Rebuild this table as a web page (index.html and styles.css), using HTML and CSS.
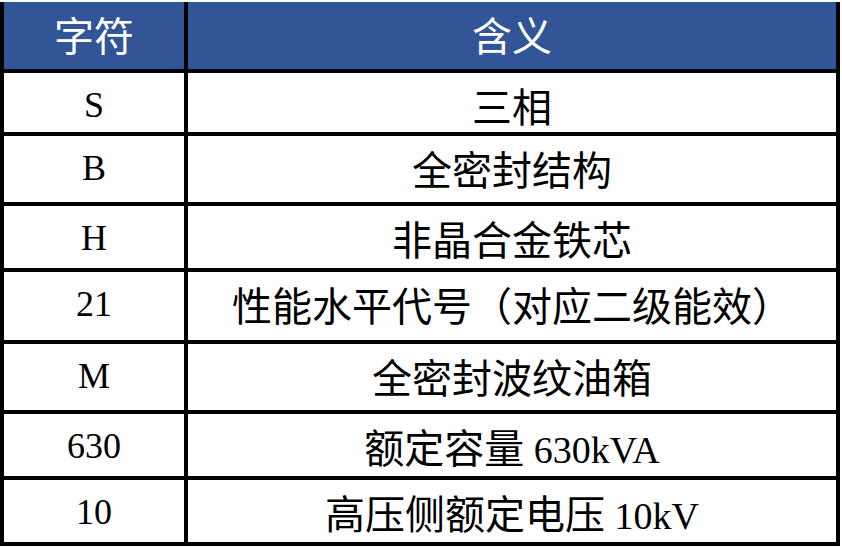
FILE: index.html
```html
<!DOCTYPE html>
<html lang="zh-CN">
<head>
<meta charset="utf-8">
<title>变压器型号含义</title>
<link rel="stylesheet" href="styles.css">
</head>
<body>
<div class="spec-table">
  <div class="cell head first"><span class="zh">字符</span></div>
  <div class="cell head"><span class="zh">含义</span></div>

  <div class="cell first">S</div>
  <div class="cell"><span class="zh">三相</span></div>

  <div class="cell first">B</div>
  <div class="cell"><span class="zh">全密封结构</span></div>

  <div class="cell first">H</div>
  <div class="cell"><span class="zh">非晶合金铁芯</span></div>

  <div class="cell first">21</div>
  <div class="cell"><span class="zh">性能水平代号（对应二级能效）</span></div>

  <div class="cell first">M</div>
  <div class="cell"><span class="zh">全密封波纹油箱</span></div>

  <div class="cell first">630</div>
  <div class="cell"><span class="zh">额定容量</span><span class="en">&nbsp;630kVA</span></div>

  <div class="cell first">10</div>
  <div class="cell"><span class="zh">高压侧额定电压</span><span class="en">&nbsp;10kV</span></div>
</div>
</body>
</html>
```

FILE: styles.css
```css
html, body {
  margin: 0;
  padding: 0;
  background: #ffffff;
}

body {
  padding-top: 2px;
  font-family: "Liberation Serif", "Noto Sans CJK SC", serif;
  color: #000000;
}

.spec-table {
  display: grid;
  width: 840px;
  grid-template-columns: 188px 652px;
  grid-template-rows: 71px 63px 70px 66px 72px 70px 66px 66px;
}

.cell {
  box-sizing: border-box;
  display: flex;
  align-items: baseline;
  justify-content: center;
  padding-top: 12px;
  border-right: 4px solid #000;
  border-bottom: 4px solid #000;
  font-size: 36px;
  line-height: 40px;
  white-space: nowrap;
}

.cell.first {
  border-left: 4px solid #000;
}

.cell.head {
  background: #315597;
  color: #ffffff;
}

.zh {
  font-family: "Noto Sans CJK SC", sans-serif;
  font-size: 40px;
}

.en {
  font-size: 38px;
}
```
